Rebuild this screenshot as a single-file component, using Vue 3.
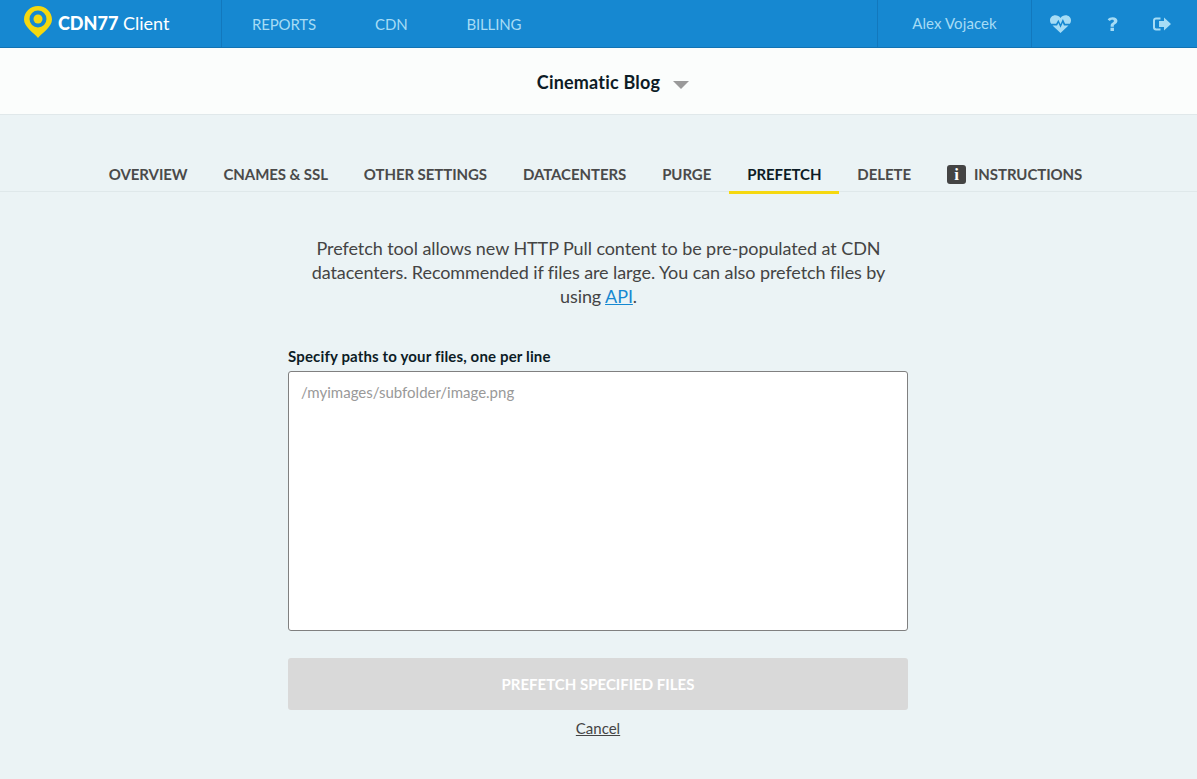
<template>
  <div class="page">
    <!-- Top bar -->
    <header class="topbar">
      <div class="brand">
        <svg class="logo" width="28" height="32" viewBox="0 0 28 32">
          <path fill="#f5d80f" fill-rule="evenodd" d="M14 32 C10 27 0 21 0 13.5 C0 6 6.3 0 14 0 C21.7 0 28 6 28 13.5 C28 21 18 27 14 32 Z M14 4.5 A8.5 8.5 0 1 0 14 21.5 A8.5 8.5 0 1 0 14 4.5 Z" />
          <circle cx="14" cy="13" r="4.5" fill="#f5d80f" />
        </svg>
        <span class="brand-name"><b>CDN77</b> Client</span>
      </div>
      <nav class="mainnav">
        <a v-for="item in mainNav" :key="item" class="mainnav-item">{{ item }}</a>
      </nav>
      <div class="user">Alex Vojacek</div>
      <div class="icons">
        <svg class="ico-heart" width="21" height="18" viewBox="0 0 22 20" preserveAspectRatio="none">
          <path fill="#a6dcf5" d="M11 20 L2.6 11.6 H7.4 L8.8 9 L11 14.2 L13.4 8.6 L14.6 11.6 H19.4 Z" />
          <path fill="#a6dcf5" d="M1.2 9.8 C0.4 8.6 0 7.4 0 6 C0 2.6 2.5 0.2 5.6 0.2 C7.8 0.2 9.8 1.4 11 3.2 C12.2 1.4 14.2 0.2 16.4 0.2 C19.5 0.2 22 2.6 22 6 C22 7.4 21.6 8.6 20.8 9.8 H15.8 L13.5 4.4 L11 10.2 L8.8 5.2 L6.4 9.8 Z" />
        </svg>
        <svg class="ico-help" width="11" height="14" viewBox="0 0 12 16" preserveAspectRatio="none">
          <path fill="#a6dcf5" d="M4 11 V9.6 C4 8 5 7.2 6 6.5 C6.9 5.9 7.5 5.4 7.5 4.6 C7.5 3.7 6.8 3.2 5.9 3.2 C4.8 3.2 3.8 3.8 3 4.7 L0.7 2.8 C2 1.1 3.8 0.2 6.2 0.2 C9.2 0.2 11.4 1.8 11.4 4.4 C11.4 6.3 10.3 7.3 9.1 8.1 C8.1 8.8 7.4 9.3 7.4 10.2 V11 Z M3.8 12.4 H7.6 V16 H3.8 Z" />
        </svg>
        <svg class="ico-exit" width="18" height="14" viewBox="0 0 18 14">
          <path fill="#a6dcf5" d="M11 0.6 L18 7 L11 13.4 V10 H6 V4 H11 Z" />
          <path fill="#a6dcf5" d="M3 0.5 H7.5 V2.5 H3.2 C2.5 2.5 2 3 2 3.7 V10.3 C2 11 2.5 11.5 3.2 11.5 H7.5 V13.5 H3 C1.3 13.5 0 12.2 0 10.5 V3.5 C0 1.8 1.3 0.5 3 0.5 Z" />
        </svg>
      </div>
    </header>

    <!-- CDN resource picker -->
    <div class="picker">
      <span class="picker-name">
        Cinematic Blog
        <span class="picker-arrow"></span>
      </span>
    </div>

    <!-- Tabs -->
    <div class="tabs">
      <a v-for="tab in tabs" :key="tab" class="tab" :class="{ active: tab === 'PREFETCH' }">
        <span v-if="tab === 'INSTRUCTIONS'" class="info-badge">i</span>{{ tab }}
      </a>
    </div>

    <!-- Prefetch form -->
    <main class="content">
      <p class="intro">
        Prefetch tool allows new HTTP Pull content to be pre-populated at CDN datacenters. Recommended if files are large. You can also prefetch files by using <a class="api-link">API</a>.
      </p>
      <form class="form" @submit.prevent>
        <label class="field-label" for="paths">Specify paths to your files, one per line</label>
        <textarea id="paths" class="paths" placeholder="/myimages/subfolder/image.png"></textarea>
        <button class="submit" type="button" disabled>PREFETCH SPECIFIED FILES</button>
        <a class="cancel">Cancel</a>
      </form>
    </main>
  </div>
</template>

<script setup>
const mainNav = ['REPORTS', 'CDN', 'BILLING'];

const tabs = ['OVERVIEW', 'CNAMES & SSL', 'OTHER SETTINGS', 'DATACENTERS', 'PURGE', 'PREFETCH', 'DELETE', 'INSTRUCTIONS'];
</script>

<style>
html, body {
  background: #ebf3f5;
}
</style>

<style scoped>
.page {
  min-height: 779px;
  background: #ebf3f5;
  font-family: Lato, "Open Sans", sans-serif;
  color: #444;
}

.topbar {
  display: flex;
  height: 47px;
  background: #1688d1;
  border-bottom: 1px solid #1273b3;
}

.brand {
  display: flex;
  align-items: center;
  width: 222px;
  padding-left: 24px;
  box-sizing: border-box;
  border-right: 1px solid #1278bd;
  color: #fff;
}

.logo {
  flex: none;
  margin-bottom: 3px;
}

.brand-name {
  margin-left: 6px;
  margin-bottom: 2px;
  font-size: 18px;
}

.brand-name b {
  font-weight: 900;
}

.mainnav {
  display: flex;
  flex: 1;
  align-items: center;
  padding-left: 30px;
}

.mainnav-item {
  font-size: 15px;
  letter-spacing: -0.15px;
  color: #a6dcf5;
  margin-right: 59px;
}

.user {
  width: 155px;
  box-sizing: border-box;
  display: flex;
  align-items: center;
  justify-content: center;
  padding-bottom: 2px;
  font-size: 15px;
  letter-spacing: 0.1px;
  color: #a6dcf5;
  border-left: 1px solid #1278bd;
  border-right: 1px solid #1278bd;
}

.icons {
  display: flex;
  align-items: center;
  width: 165px;
  padding-left: 18px;
  box-sizing: border-box;
}

.ico-help {
  margin-left: 36px;
}

.ico-exit {
  margin-left: 35px;
}

.picker {
  display: flex;
  align-items: center;
  justify-content: center;
  height: 66px;
  background: #fbfdfc;
  border-bottom: 1px solid #e0e8ea;
}

.picker-name {
  position: relative;
  margin-top: 2px;
  font-size: 18px;
  letter-spacing: 0.2px;
  font-weight: 700;
  color: #0d1c26;
}

/* arrow hangs off the name, the name itself stays centred */
.picker-arrow {
  position: absolute;
  top: 10px;
  right: -29px;
  width: 0;
  height: 0;
  border-left: 8px solid transparent;
  border-right: 8px solid transparent;
  border-top: 8px solid #9a9a9a;
}

.tabs {
  display: flex;
  justify-content: center;
  height: 51px;
  margin-top: 26px;
  padding-right: 6px;
  border-bottom: 1px solid #dfe8ea;
  box-sizing: border-box;
}

.tab {
  display: flex;
  align-items: center;
  height: 53px;
  box-sizing: border-box;
  padding: 15px 18px 0;
  font-size: 15px;
  letter-spacing: -0.08px;
  font-weight: 700;
  color: #4a4a4a;
  border-bottom: 3px solid transparent;
  white-space: nowrap;
}

.tab.active {
  color: #0d1c26;
  border-bottom-color: #f5d80f;
}

.info-badge {
  display: inline-block;
  width: 19px;
  height: 19px;
  margin-top: 2px;
  margin-right: 8px;
  border-radius: 3px;
  background: #444;
  color: #fff;
  font-family: "Liberation Serif", serif;
  font-size: 17px;
  font-weight: 700;
  line-height: 19px;
  text-align: center;
}

.content {
  display: flex;
  flex-direction: column;
  align-items: center;
  padding-top: 44px;
}

.intro {
  width: 600px;
  margin: 0;
  font-size: 18px;
  letter-spacing: -0.08px;
  line-height: 24px;
  text-align: center;
  color: #444;
}

.api-link {
  color: #1688d1;
  text-decoration: underline;
}

.form {
  display: flex;
  flex-direction: column;
  width: 620px;
  margin-top: 39px;
  margin-right: 1px;
}

.field-label {
  font-size: 15px;
  letter-spacing: 0.15px;
  font-weight: 700;
  line-height: 18px;
  color: #0d1c26;
  margin-bottom: 6px;
}

.paths {
  display: block;
  height: 260px;
  box-sizing: border-box;
  padding: 10px 12px;
  border: 1px solid #808080;
  border-radius: 3px;
  background: #fff;
  font-family: Lato, "Open Sans", sans-serif;
  font-size: 15px;
  line-height: 20px;
  resize: none;
  outline: none;
}

.paths::placeholder {
  color: #999;
  opacity: 1;
}

.submit {
  height: 52px;
  margin-top: 27px;
  border: 0;
  border-radius: 3px;
  background: #d9d9d9;
  color: #fff;
  font-family: Lato, "Open Sans", sans-serif;
  font-size: 15px;
  font-weight: 700;
}

.cancel {
  align-self: center;
  margin-top: 9px;
  font-size: 15px;
  line-height: 18px;
  color: #444;
  text-decoration: underline;
}
</style>
